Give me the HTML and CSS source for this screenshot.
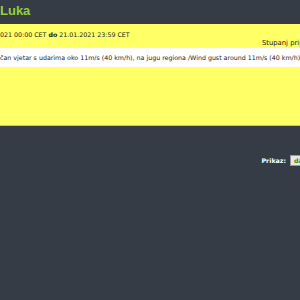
FILE: index.html
```html
<!DOCTYPE html>
<html lang="hr">
<head>
    <meta charset="UTF-8">
    <meta name="viewport" content="width=device-width, initial-scale=1.0">
    <title>Luka</title>
    <link rel="stylesheet" href="styles.css">
</head>
<body>
    <div class="page">
        <h1 class="title">Luka</h1>
        <div class="warning">
            <div class="period">2021 00:00 CET <b>do</b> 21.01.2021 23:59 CET</div>
            <div class="level">Stupanj pripravnosti</div>
            <div class="row">Pojačan vjetar s udarima oko 11m/s (40 km/h), na jugu regiona /Wind gust around 11m/s (40 km/h)</div>
        </div>
        <div class="filter">
            <span class="label">Prikaz:</span>
            <span class="select">dan</span>
        </div>
    </div>
</body>
</html>
```

FILE: styles.css
```css
body {
    margin: 0;
    overflow: hidden;
    background-color: #353c46;
    font-family: "DejaVu Sans", Verdana, sans-serif;
}

.page {
    width: 350px;
    margin-left: -10px;
}

.title {
    margin: 0;
    height: 24px;
    padding: 3px 0 0 10px;
    box-sizing: border-box;
    font-family: "Liberation Sans", Arial, sans-serif;
    font-size: 13px;
    font-weight: bold;
    color: #93cf3e;
}

.warning {
    background-color: #ffff66;
    height: 102px;
    box-sizing: border-box;
    padding-top: 7px;
    border-bottom: 1px solid #c9c94a;
    font-size: 6.3px;
    color: #1a1a1a;
    white-space: nowrap;
}

.period {
    padding-left: 6px;
    line-height: 8px;
    font-size: 6.3px;
}

.level {
    text-align: right;
    padding-right: 9px;
    line-height: 8px;
    font-size: 6.8px;
}

.row {
    margin-top: 1px;
    height: 19px;
    line-height: 19px;
    background-color: #fff;
    text-indent: -3px;
    overflow: hidden;
}

.filter {
    display: flex;
    justify-content: flex-end;
    align-items: center;
    gap: 4px;
    margin-top: 29px;
    padding-right: 9px;
}

.label {
    color: #fff;
    font-size: 6.3px;
    font-weight: bold;
}

.select {
    width: 36px;
    height: 9px;
    line-height: 9px;
    padding-left: 3px;
    background-color: #e8e8e8;
    border: 1px solid #999;
    color: #3a8a1a;
    font-size: 6.3px;
    font-weight: bold;
}
```
